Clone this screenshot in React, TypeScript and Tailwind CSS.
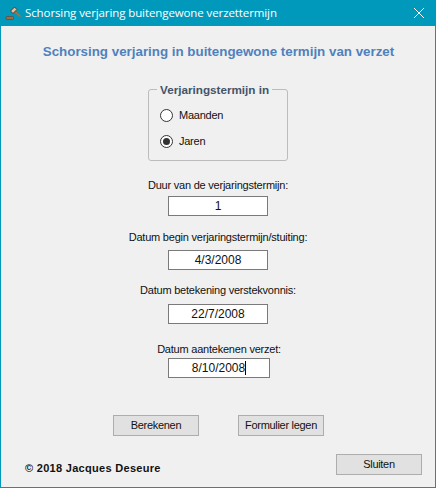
const FONT = "font-['Liberation_Sans',Arial,sans-serif]";

function Field({ label, value, className, gap, wide, caret }: { label: string; value: string; className: string; gap: string; wide?: boolean; caret?: boolean }) {
  return (
    <div className={`flex flex-col items-center ${className}`}>
      <div className="text-[11px] leading-[14px] tracking-[-0.22px] text-[#111]">{label}</div>
      <div className={`${gap} ${wide ? 'w-[102px]' : 'w-[100px]'} h-[20px] bg-white border border-[#7a7a7a] flex items-center justify-center text-[12px] text-[#111]`}>
        <span>{value}</span>
        {caret && <span className="w-px h-[14px] bg-black" />}
      </div>
    </div>
  );
}

function Btn({ children }: { children: string }) {
  return (
    <button className="w-[86px] h-[21px] bg-[#e1e1e1] border border-[#adadad] text-[11px] leading-none tracking-[-0.3px] text-[#111]">
      {children}
    </button>
  );
}

function Radio({ label, checked }: { label: string; checked?: boolean }) {
  return (
    <div className="flex items-center gap-[6px] h-[13px]">
      <span className="w-[13px] h-[13px] rounded-full bg-white border border-[#333] flex items-center justify-center">
        {checked && <span className="w-[7px] h-[7px] rounded-full bg-[#333]" />}
      </span>
      <span className="text-[11px] tracking-[-0.25px] text-[#111]">{label}</span>
    </div>
  );
}

export default function App() {
  return (
    <div className={`${FONT} w-[436px] h-[488px] flex flex-col bg-[#f0f0f0] border border-t-0 border-[#0099bc] overflow-hidden`}>
      {/* title bar */}
      <div className="h-[26px] -mx-px bg-[#0099bc] flex items-center text-white flex-shrink-0">
        <svg width="16" height="16" viewBox="0 0 16 16" className="ml-[5px]">
          <path d="M9 6 L15.5 11.5" stroke="#a8703c" strokeWidth="1.8" />
          <path d="M5.5 6 L9.5 2 L12 4.5 L8 8.5 Z" fill="#e0c0a0" stroke="#4a3a30" strokeWidth="1" />
          <rect x="1" y="11.5" width="7.5" height="3" rx="1" fill="#a06c48" stroke="#5a4030" strokeWidth="0.6" />
        </svg>
        <span className="ml-[4px] text-[11.5px] font-['Open_Sans',sans-serif] tracking-[-0.1px]">Schorsing verjaring buitengewone verzettermijn</span>
        <svg width="10" height="10" viewBox="0 0 10 10" className="ml-auto mr-[12px]">
          <path d="M0 0 L10 10 M10 0 L0 10" stroke="white" strokeWidth="1" />
        </svg>
      </div>

      <div className="flex-1 flex flex-col items-center">
        <h1 className="mt-[18px] ml-[1px] text-[13.35px] leading-[16px] font-bold text-[#4f81bd]">
          Schorsing verjaring in buitengewone termijn van verzet
        </h1>

        {/* groupbox */}
        <div className="relative mt-[29px] w-[140px] h-[72px] border border-[#bcbcbc] rounded-[3px] pl-[11px] pt-[19px] flex flex-col gap-[13px]">
          <span className="absolute left-[8px] -top-[7px] bg-[#f0f0f0] px-[3px] text-[11.7px] leading-[14px] font-bold text-[#44546a]">
            Verjaringstermijn in
          </span>
          <Radio label="Maanden" />
          <Radio label="Jaren" checked />
        </div>

        <Field className="mt-[17px]" gap="mt-[4px]" label="Duur van de verjaringstermijn:" value="1" />
        <Field className="mt-[14px]" gap="mt-[6px]" label="Datum begin verjaringstermijn/stuiting:" value="4/3/2008" />
        <Field className="mt-[13px]" gap="mt-[7px]" label="Datum betekening verstekvonnis:" value="22/7/2008" />
        <Field className="mt-[18px] ml-[2px]" gap="mt-[2px]" label="Datum aantekenen verzet:" value="8/10/2008" wide caret />

        <div className="mt-[37px] w-full flex pl-[112px] gap-[39px]">
          <Btn>Berekenen</Btn>
          <Btn>Formulier legen</Btn>
        </div>

        <div className="mt-[17px] w-full flex items-center justify-between pl-[24px] pr-[13px]">
          <span className="mt-[7px] text-[11px] font-bold tracking-[0.3px] text-[#111]">© 2018 Jacques Deseure</span>
          <Btn>Sluiten</Btn>
        </div>
      </div>
    </div>
  );
}
